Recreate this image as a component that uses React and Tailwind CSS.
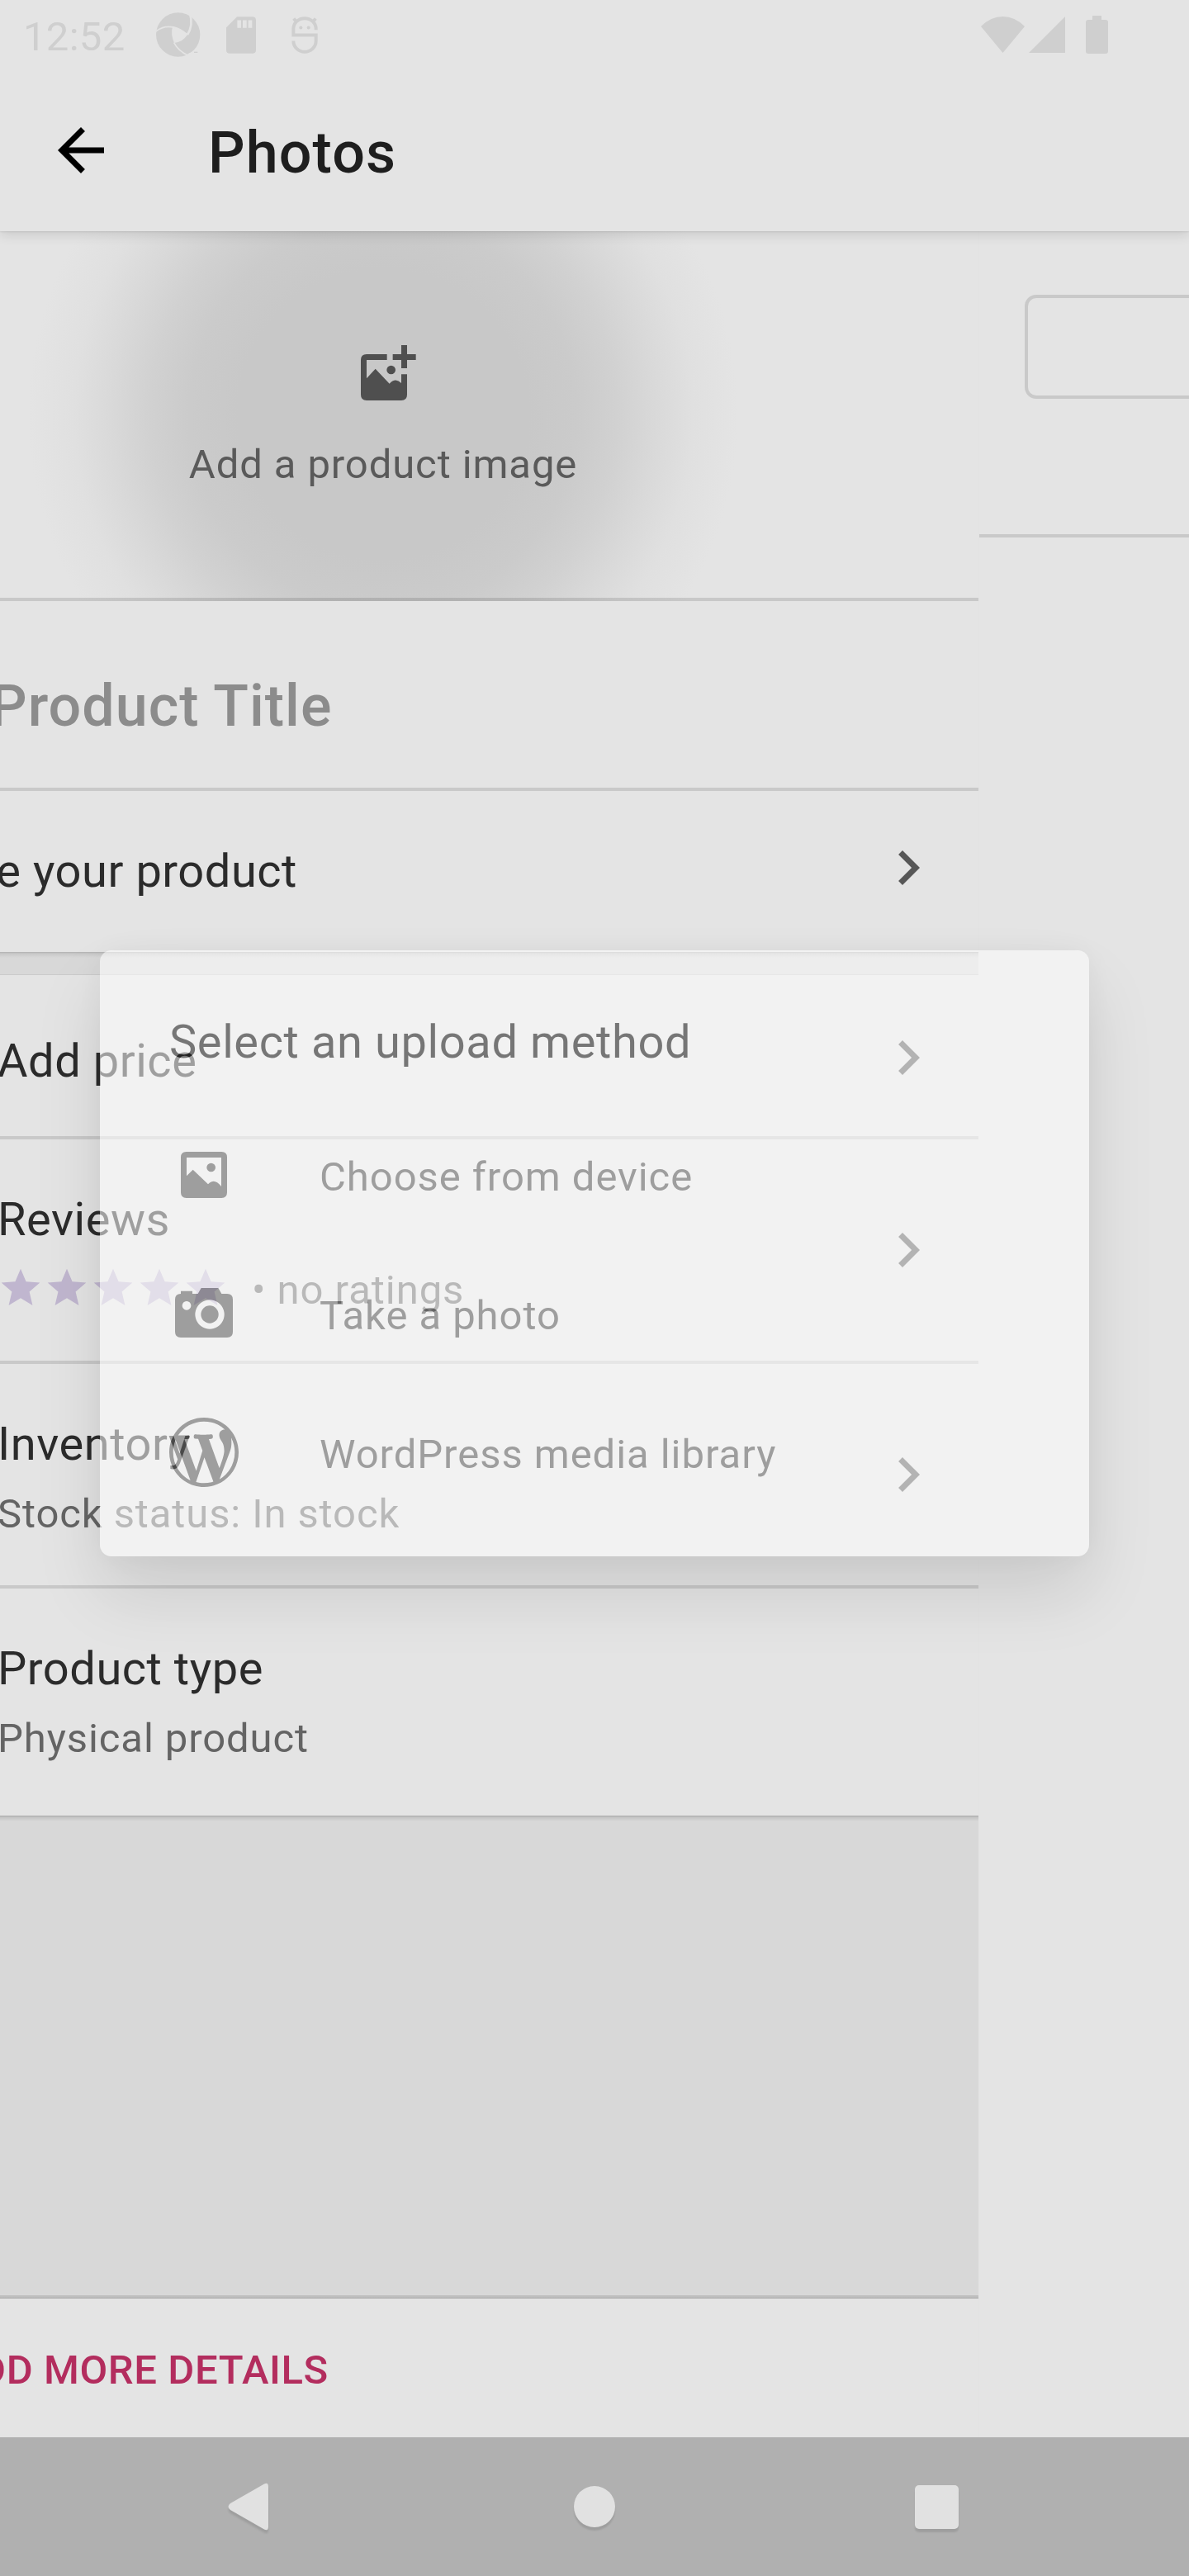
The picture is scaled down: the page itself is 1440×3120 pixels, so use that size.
import React from "react";

const PinwheelIcon = () => (
  <svg className="ml-[37px] h-[54px] w-[54px]" viewBox="26 46 162 162" fill="none">
    <circle cx="106" cy="127" r="80" fill="#cfcfcf" />
    <path d="M86 97 Q115 100 140 127 Q122 155 92 157 Q78 128 86 97Z" fill="#e4e4e4" />
    <path d="M24 116 Q76 76 140 127" stroke="#e4e4e4" strokeWidth="5" />
    <path d="M149 50 Q162 92 140 127" stroke="#e4e4e4" strokeWidth="8" />
    <path d="M91 156 Q106 185 142 203" stroke="#e4e4e4" strokeWidth="5" />
    <path d="M132 206 Q146 190 158 192 L172 184 L172 210Z" fill="#e4e4e4" />
    <path d="M164 191h13" stroke="#cfcfcf" strokeWidth="4" />
  </svg>
);

const SdCardIcon = () => (
  <svg className="ml-[31px] h-[45px] w-[36px]" viewBox="283 60 108 134">
    <path
      fillRule="evenodd"
      fill="#cfcfcf"
      d="M322 60H378Q391 60 391 73V181Q391 194 378 194H296Q283 194 283 181V99ZM323 73V101H337V73ZM343 73V101H357V73ZM363 73V101H377V73Z"
    />
  </svg>
);

const FaceIcon = () => (
  <svg className="ml-[43px] h-[45px] w-[32px]" viewBox="520 60 96 134" fill="none" stroke="#cfcfcf" strokeWidth="12">
    <path d="M609 108V104A41 38 0 0 0 527 104V127H609V148A41 40 0 0 1 527 148" />
    <path d="M528 67L540 80M608 67L596 80" />
    <circle cx="554" cy="100" r="6" fill="#cfcfcf" stroke="none" />
    <circle cx="582" cy="100" r="6" fill="#cfcfcf" stroke="none" />
  </svg>
);

const StatusBar = () => (
  <div className="flex h-[84px] items-center pl-[28px] text-[49px] leading-[58px] tracking-[0.3px] text-[#cfcfcf]">
    <span className="w-[124px] pt-[5px]">12:52</span>
    <PinwheelIcon />
    <SdCardIcon />
    <FaceIcon />
    <svg className="ml-auto h-[44px] w-[53px]" viewBox="0 0 53 44" fill="#cfcfcf">
      <path d="M0 12Q12 0 26.500 0T53 12L26.500 44Z" />
    </svg>
    <svg className="ml-[5px] h-[44px] w-[44px]" viewBox="0 0 44 44" fill="#cfcfcf">
      <path d="M44 0V44H0Z" />
    </svg>
    <svg className="mr-[98px] ml-[25px] h-[46px] w-[27px]" viewBox="0 0 27 46" fill="#cfcfcf">
      <path d="M8 0H19V5H24Q27 5 27 8V43Q27 46 24 46H3Q0 46 0 43V8Q0 5 3 5H8Z" />
    </svg>
  </div>
);

const Chevron = ({ className }) => (
  <svg className={`mr-[43px] h-[84px] w-[84px] shrink-0 ${className}`} viewBox="0 0 24 24" fill="#575757">
    <path d="M8.590 16.590L13.170 12 8.590 7.410 10 6l6 6-6 6z" />
  </svg>
);

const AddImageIcon = () => (
  <svg className="h-[67px] w-[67px]" viewBox="50 54 201 201" fill="#4f4f4f">
    <path d="M71 87H145V108H71V175L103 140L154 194Q176 170 197 192V160H218V234Q218 255 197 255H71Q50 255 50 234V108Q50 87 71 87Z" />
    <circle cx="160" cy="144" r="16" />
    <path d="M197 54H218V87H250V108H218V138H197V108H166V87H197Z" />
  </svg>
);

const ImageIcon = () => (
  <svg className="h-[56px] w-[56px]" viewBox="0 0 168 168" fill="#656565">
    <path
      fillRule="evenodd"
      d="M20 0H148Q168 0 168 20V148Q168 168 148 168H20Q0 168 0 148V20Q0 0 20 0ZM21 21V88L44 65L99 118Q121 93 147 126V21Z"
    />
    <circle cx="110" cy="57" r="16" />
  </svg>
);

const CameraIcon = () => (
  <svg className="mb-[3px] h-[60px] w-[70px]" viewBox="0 0 210 180" fill="#656565">
    <path
      fillRule="evenodd"
      d="M21 21V11H63V21H83L95 0H157L169 21H189Q210 21 210 42V159Q210 180 189 180H21Q0 180 0 159V42Q0 21 21 21ZM42 48a16 16 0 1 0 .1 0ZM126 43a53 53 0 1 0 .1 0Z"
    />
    <circle cx="126" cy="96" r="32" />
  </svg>
);

const WordPressIcon = () => (
  <svg className="h-[84px] w-[84px]" viewBox="0 0 20 20" fill="#656565">
    <path d="M20 10c0-5.510-4.490-10-10-10C4.480 0 0 4.490 0 10c0 5.520 4.480 10 10 10 5.510 0 10-4.480 10-10zM7.780 15.370L4.370 6.220c.550-.020 1.170-.080 1.170-.080.500-.060.440-1.130-.060-1.110 0 0-1.450.110-2.370.110-.180 0-.370 0-.580-.010C4.120 2.690 6.870 1.110 10 1.110c2.330 0 4.450.870 6.050 2.340-.680-.110-1.650.390-1.650 1.580 0 .740.450 1.360.900 2.100.350.610.550 1.360.550 2.460 0 1.490-1.400 5-1.400 5l-3.030-8.370c.540-.020.820-.170.820-.170.500-.050.440-1.250-.060-1.220 0 0-1.440.120-2.380.120-.870 0-2.330-.120-2.330-.120-.500-.030-.560 1.200-.060 1.220l.920.080 1.260 3.410zM17.410 10c.240-.640.740-1.870.430-4.250.700 1.290 1.050 2.710 1.050 4.250 0 3.290-1.730 6.240-4.400 7.780.970-2.590 1.940-5.200 2.920-7.780zM6.100 18.090C3.120 16.650 1.110 13.530 1.110 10c0-1.300.230-2.480.720-3.590C3.250 10.300 4.670 14.200 6.100 18.090zm4.030-6.630l2.580 6.980c-.860.290-1.760.450-2.710.450-.790 0-1.570-.110-2.290-.330.810-2.380 1.620-4.740 2.420-7.100z" />
  </svg>
);

const Star = () => (
  <svg className="h-[56px] w-[56px]" viewBox="0 0 24 24" fill="#c0b6cf">
    <path d="M12 17.270L18.180 21l-1.640-7.030L22 9.240l-7.190-.610L12 2 9.190 8.630 2 9.240l5.460 4.730L5.820 21z" />
  </svg>
);

const Row = ({ title, height, pad, chevron, divider = true, children }) => (
  <div className={`flex items-start bg-[#e4e4e4] ${height} ${divider ? "border-b-4 border-[#c9c9c9]" : ""}`}>
    <div className={`-ml-[3px] flex-1 whitespace-nowrap ${pad}`}>
      <div className="text-[56px] leading-[66px] tracking-[0.525px] text-[#2b2b2b]">{title}</div>
      {children}
    </div>
    {chevron && <Chevron className={chevron} />}
  </div>
);

const Detail = ({ children }) => (
  <div className="mt-[23px] text-[49px] leading-[58px] tracking-[0.9px] text-[#646464]">{children}</div>
);

const Option = ({ icon, label }) => (
  <div className="flex h-[168px] items-center">
    <div className="flex h-[84px] w-[84px] items-center justify-center">{icon}</div>
    <span className="ml-[98px] pt-[5px] text-[49px] leading-[58px] tracking-[0.95px] text-[#656565]">{label}</span>
  </div>
);

export default function App() {
  return (
    <div className="relative flex h-[3120px] w-[1440px] flex-col overflow-hidden bg-[#e4e4e4] font-[Roboto,sans-serif]">
      <header className="z-10 h-[280px] shrink-0 bg-[#e4e4e4] shadow-[0_4px_14px_rgba(0,0,0,0.12),0_1px_2px_rgba(0,0,0,0.08)]">
        <StatusBar />
        <div className="flex h-[196px] items-center pl-[56px]">
          <svg className="h-[84px] w-[84px]" viewBox="0 0 24 24" fill="#000">
            <path d="M20 11H7.830l5.590-5.590L12 4l-8 8 8 8 1.410-1.410L7.830 13H20v-2z" />
          </svg>
          <h1 className="ml-[112px] pt-[6px] text-[70px] leading-[82px] font-medium tracking-[1.1px] text-[#1e1e1e]">Photos</h1>
        </div>
      </header>

      <main className="flex h-[2672px] shrink-0">
        <section className="flex w-[1185px] shrink-0 flex-col overflow-hidden bg-[#d8d8d8]">
          <div className="h-[448px] border-b-4 border-black/12 bg-[#e4e4e4] bg-[radial-gradient(circle_at_464px_222px,#c8c8c8_0px,#c8c8c8_176px,#cbcbcb_235px,#d1d1d1_283px,#d9d9d9_330px,#e0e0e0_375px,#e4e4e4_430px)] [background-clip:border-box]">
            <div className="flex w-[928px] flex-col items-center pt-[138px]">
              <div className="w-[80px] pl-[13px]">
                <AddImageIcon />
              </div>
              <div className="mt-[49px] text-[49px] leading-[58px] tracking-[0.9px] text-[#5a5a5a]">Add a product image</div>
            </div>
          </div>
          <div className="h-[230px] border-b-4 border-[#c9c9c9] bg-[#e4e4e4] pt-[86px]">
            <div className="-ml-[12px] text-[70px] leading-[82px] font-medium tracking-[1px] text-[#8c8c8c]">Product Title</div>
          </div>
          <div className="flex h-[195px] items-start bg-[#e4e4e4]">
            <div className="-ml-[197px] flex-1 pt-[64px] text-[56px] leading-[66px] tracking-[0.525px] whitespace-nowrap text-[#2b2b2b]">
              Describe your product
            </div>
            <Chevron className="mt-[51px]" />
          </div>
          <div className="h-[28px] border-b border-[#cbcbcb] bg-[linear-gradient(#b0b0b0,#c8c8c8_2px,#d8d8d8_7px)]" />

          <Row title="Add price" height="h-[199px]" pad="pt-[71px]" chevron="mt-[58px]" />
          <Row title="Reviews" height="h-[272px]" pad="pt-[64px]" chevron="mt-[92px]">
            <div className="mt-[22px] flex h-[56px] items-center">
              <Star />
              <Star />
              <Star />
              <Star />
              <Star />
              <span className="ml-[28px] pt-[5px] text-[49px] leading-[58px] tracking-[0.95px] text-[#646464]">• no ratings</span>
            </div>
          </Row>
          <Row title="Inventory" height="h-[272px]" pad="pt-[64px]" chevron="mt-[92px]">
            <Detail>Stock status: In stock</Detail>
          </Row>
          <Row title="Product type" height="h-[275px]" pad="pt-[64px]" divider={false}>
            <Detail>Physical product</Detail>
          </Row>
          <div className="h-[581px] bg-[linear-gradient(#a8a8a8,#c4c4c4_2px,#d8d8d8_7px)]" />

          <div className="h-[4px] bg-[linear-gradient(#bfbfbf_2px,#acacac)]" />
          <div className="flex-1 bg-[#e4e4e4] pt-[58px]">
            <div className="-ml-[58px] text-[49px] leading-[58px] font-medium tracking-[0.6px] whitespace-nowrap text-[#b32d5e]">
              ADD MORE DETAILS
            </div>
          </div>
        </section>

        <section className="flex-1 overflow-hidden border-l border-[#e3e3e3]">
          <div className="h-[371px] border-b-4 border-[#c9c9c9] pt-[77px] pl-[55px]">
            <div className="h-[126px] w-[260px] rounded-[14px] border-4 border-[#c9c9c9]" />
          </div>
        </section>
      </main>

      <div className="absolute top-[1151px] left-[121px] h-[734px] w-[1198px] rounded-[14px] bg-white pt-[78px] pl-[84px] opacity-55 shadow-[0_45px_85px_rgba(0,0,0,0.2),0_0_35px_rgba(0,0,0,0.08)]">
        <h2 className="text-[56px] leading-[66px] tracking-[0.6px] text-[#1e1e1e]">Select an upload method</h2>
        <div className="mt-[44px]">
          <Option icon={<ImageIcon />} label="Choose from device" />
          <Option icon={<CameraIcon />} label="Take a photo" />
          <Option icon={<WordPressIcon />} label="WordPress media library" />
        </div>
      </div>

      <nav className="z-10 flex h-[168px] shrink-0 items-center bg-[#b0b0b0]">
        <svg className="ml-[276px] h-[64px] w-[49px] drop-shadow-[0_4px_1px_rgba(0,0,0,0.1)]" viewBox="0 0 49 64" fill="#e1e1e1">
          <path d="M44 4.500Q49 2 49 8V56Q49 62 44 59.500L3 36Q-2 32 3 28Z" />
        </svg>
        <div className="ml-[370px] h-[50px] w-[50px] rounded-full bg-[#e1e1e1] shadow-[0_4px_2px_rgba(0,0,0,0.1)]" />
        <div className="ml-[363px] h-[53px] w-[53px] rounded-[5px] bg-[#e1e1e1] shadow-[0_4px_2px_rgba(0,0,0,0.1)]" />
      </nav>
    </div>
  );
}
